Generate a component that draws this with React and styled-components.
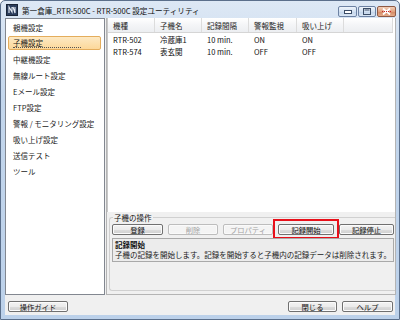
import React from "react";
import styled, { createGlobalStyle, css } from "styled-components";

const Global = createGlobalStyle`
  html, body { margin: 0; padding: 0; background: #fff; }
  body { font-family: "Noto Sans CJK JP", "Liberation Sans", sans-serif; font-size: 7.5px; color: #1a1a1a; }
  * { box-sizing: border-box; }
`;

const Window = styled.div`
  width: 400px;
  height: 320px;
  border: 1px solid #5b6f8b;
  border-radius: 5px 5px 0 0;
  background: linear-gradient(#dde8f5, #c3d6ec 30%, #bcd1ea);
  display: flex;
  flex-direction: column;
  padding: 0 4px 4px 4px;
`;

const TitleBar = styled.div`
  height: 17px;
  display: flex;
  align-items: flex-start;
  justify-content: space-between;
`;

const TitleLeft = styled.div`
  display: flex;
  align-items: center;
  gap: 4px;
  height: 15px;
  padding-top: 3px;
  padding-left: 1px;
`;

const TitleText = styled.span`
  font-size: 7.6px;
  color: #111;
  white-space: nowrap;
`;

const Controls = styled.div`
  display: flex;
  gap: 1px;
  margin-top: 5px;
  margin-right: -1px;
`;

const CtrlBtn = styled.div`
  width: ${(p) => p.$w}px;
  height: 11px;
  border: 1px solid #6d82a3;
  border-radius: 2px;
  display: flex;
  align-items: center;
  justify-content: center;
  background: linear-gradient(#eef4fb, #d3e1f1 50%, #c2d4ea 51%, #d9e6f4);
  ${(p) =>
    p.$close &&
    css`
      border-color: #8e5a44;
      background: linear-gradient(#f2cfb8, #e2a27f 50%, #d28660 51%, #e5ad8c);
    `}
`;

const Client = styled.div`
  flex: 1;
  background: #f0f0f0;
  display: flex;
  flex-direction: column;
`;

const Main = styled.div`
  height: 277px;
  display: flex;
  gap: 1px;
`;

const NavPanel = styled.div`
  width: 100px;
  background: #fff;
  border: 1px solid #828790;
  display: flex;
  flex-direction: column;
`;

const NavItem = styled.div`
  height: 16px;
  padding: 1px 3px 1px 2px;
  display: flex;
`;

const NavLabel = styled.div`
  flex: 1;
  display: flex;
  align-items: center;
  padding-left: 4px;
  border: 1px solid transparent;
  border-radius: 2px;
  ${(p) =>
    p.$selected &&
    css`
      border-color: #e4ad5c;
      background: linear-gradient(#fde9c4, #fcd89a);
      & > span {
        border-bottom: 1px dotted #555;
        padding-right: 38px;
        line-height: 9px;
      }
    `}
`;

const RightPanel = styled.div`
  flex: 1;
  border: 1px solid #b4b4b4;
  border-top: none;
  display: flex;
  flex-direction: column;
  margin-right: -1px;
`;

const List = styled.div`
  height: 194px;
  background: #fff;
  border-left: 1px solid #c8c8c8;
  display: flex;
  flex-direction: column;
`;

const HeaderRow = styled.div`
  height: 15px;
  display: flex;
  background: linear-gradient(#ffffff, #f4f5f7 50%, #eceef1);
  border-bottom: 1px solid #d5d5d5;
  margin-right: 2px;
`;

const HeadCell = styled.div`
  width: ${(p) => p.$w || 47}px;
  flex: ${(p) => (p.$fill ? 1 : "none")};
  padding-left: 5px;
  display: flex;
  align-items: center;
  border-right: 1px solid #dcdcdc;
  color: #222;
`;

const Row = styled.div`
  height: 12px;
  display: flex;
`;

const Cell = styled.div`
  width: ${(p) => p.$w || 47}px;
  padding-left: 5px;
  display: flex;
  align-items: center;
  color: #111;
`;

const Group = styled.fieldset`
  margin: 1px 0 0 2px;
  padding: 0 0 2px 2px;
  border: 1px solid #d0d0d0;
  border-right: none;
  border-radius: 3px 0 0 3px;
  display: flex;
  flex-direction: column;
  gap: 3px;
  min-width: 0;
  height: 78px;
`;

const Legend = styled.legend`
  padding: 0 1px;
  margin-left: 1px;
  font-size: 7.5px;
  line-height: 9px;
  color: #111;
`;

const ButtonRow = styled.div`
  display: flex;
  gap: 5px;
  align-items: center;
  margin-top: 2px;
  margin-right: -3px;
`;

const Button = styled.div`
  width: ${(p) => p.$w}px;
  height: 11px;
  border: 1px solid ${(p) => (p.$disabled ? "#bdbdbd" : "#707070")};
  border-radius: 2px;
  background: ${(p) =>
    p.$disabled
      ? "#f4f4f4"
      : "linear-gradient(#f3f3f3, #ebebeb 50%, #dddddd 51%, #cfcfcf)"};
  color: ${(p) => (p.$disabled ? "#a3a3a3" : "#111")};
  display: flex;
  align-items: center;
  justify-content: center;
  font-size: 7.3px;
  box-shadow: inset 0 0 0 1px ${(p) => (p.$disabled ? "#fafafa" : "#fbfbfb")};
`;

const Highlight = styled.div`
  border: 2px solid #e8101a;
  padding: 3px 3px 2px 3px;
  margin: -5px -5px -4px -5px;
`;

const Desc = styled.div`
  flex: 1;
  margin-right: 1px;
  background: #ececec;
  border: 1px solid #a9a9a9;
  padding: 1px 2px;
  display: flex;
  flex-direction: column;
  line-height: 10px;
`;

const DescTitle = styled.div`
  font-weight: bold;
  color: #111;
`;

const BottomBar = styled.div`
  flex: 1;
  display: flex;
  align-items: center;
  justify-content: space-between;
  padding: 3px 2px 0 3px;
`;

const RightButtons = styled.div`
  display: flex;
  gap: 5px;
`;

const AppIcon = () => (
  <svg width="12" height="12" viewBox="0 0 12 12">
    <rect x="0.5" y="0.5" width="11" height="11" fill="#2b3d5c" stroke="#1a2538" />
    <path d="M3 9 V3 L6 8 V3 M7 3 L9 9 L9 3" fill="none" stroke="#e8eef7" strokeWidth="1.1" />
  </svg>
);

const MinGlyph = () => (
  <svg width="8" height="4" viewBox="0 0 8 4">
    <rect x="0.5" y="0.5" width="7" height="3" fill="#fff" stroke="#3c4d66" />
  </svg>
);
const MaxGlyph = () => (
  <svg width="8" height="7" viewBox="0 0 8 7">
    <rect x="0.5" y="0.5" width="7" height="6" fill="none" stroke="#3c4d66" />
    <rect x="1.5" y="1.5" width="5" height="1" fill="#3c4d66" />
  </svg>
);
const CloseGlyph = () => (
  <svg width="9" height="7" viewBox="0 0 9 7">
    <path d="M1 0.5 L8 6.5 M8 0.5 L1 6.5" stroke="#fff" strokeWidth="1.8" />
    <path d="M0 3.5 H9" stroke="#c9242b" strokeWidth="1" strokeDasharray="1 1" />
  </svg>
);

const navItems = [
  "親機設定",
  "子機設定",
  "中継機設定",
  "無線ルート設定",
  "Eメール設定",
  "FTP設定",
  "警報 / モニタリング設定",
  "吸い上げ設定",
  "送信テスト",
  "ツール",
];

const columns = [
  { label: "機種", w: 47 },
  { label: "子機名", w: 47 },
  { label: "記録間隔", w: 47 },
  { label: "警報監視", w: 48 },
  { label: "吸い上げ", w: 47 },
];

const rows = [
  ["RTR-502", "冷蔵庫1", "10 min.", "ON", "ON"],
  ["RTR-574", "表玄関", "10 min.", "OFF", "OFF"],
];

export default function App() {
  return (
    <>
      <Global />
      <Window>
        <TitleBar>
          <TitleLeft>
            <AppIcon />
            <TitleText>第一倉庫_RTR-500C - RTR-500C 設定ユーティリティ</TitleText>
          </TitleLeft>
          <Controls>
            <CtrlBtn $w={19}>
              <MinGlyph />
            </CtrlBtn>
            <CtrlBtn $w={18}>
              <MaxGlyph />
            </CtrlBtn>
            <CtrlBtn $w={19} $close>
              <CloseGlyph />
            </CtrlBtn>
          </Controls>
        </TitleBar>
        <Client>
          <Main>
            <NavPanel>
              {navItems.map((t, i) => (
                <NavItem key={t}>
                  <NavLabel $selected={i === 1}>
                    <span>{t}</span>
                  </NavLabel>
                </NavItem>
              ))}
            </NavPanel>
            <RightPanel>
              <List>
                <HeaderRow>
                  {columns.map((c) => (
                    <HeadCell key={c.label} $w={c.w}>
                      {c.label}
                    </HeadCell>
                  ))}
                  <HeadCell $fill />
                </HeaderRow>
                {rows.map((r) => (
                  <Row key={r[0]}>
                    {r.map((v, i) => (
                      <Cell key={i} $w={columns[i].w}>
                        {v}
                      </Cell>
                    ))}
                  </Row>
                ))}
              </List>
              <Group>
                <Legend>子機の操作</Legend>
                <ButtonRow>
                  <Button $w={51}>登録</Button>
                  <Button $w={50} $disabled>
                    削除
                  </Button>
                  <Button $w={50} $disabled>
                    プロパティ
                  </Button>
                  <Highlight>
                    <Button $w={56}>記録開始</Button>
                  </Highlight>
                  <Button $w={55}>記録停止</Button>
                </ButtonRow>
                <Desc>
                  <DescTitle>記録開始</DescTitle>
                  <div>子機の記録を開始します。記録を開始すると子機内の記録データは削除されます。</div>
                </Desc>
              </Group>
            </RightPanel>
          </Main>
          <BottomBar>
            <Button $w={60}>操作ガイド</Button>
            <RightButtons>
              <Button $w={49}>閉じる</Button>
              <Button $w={51}>ヘルプ</Button>
            </RightButtons>
          </BottomBar>
        </Client>
      </Window>
    </>
  );
}
